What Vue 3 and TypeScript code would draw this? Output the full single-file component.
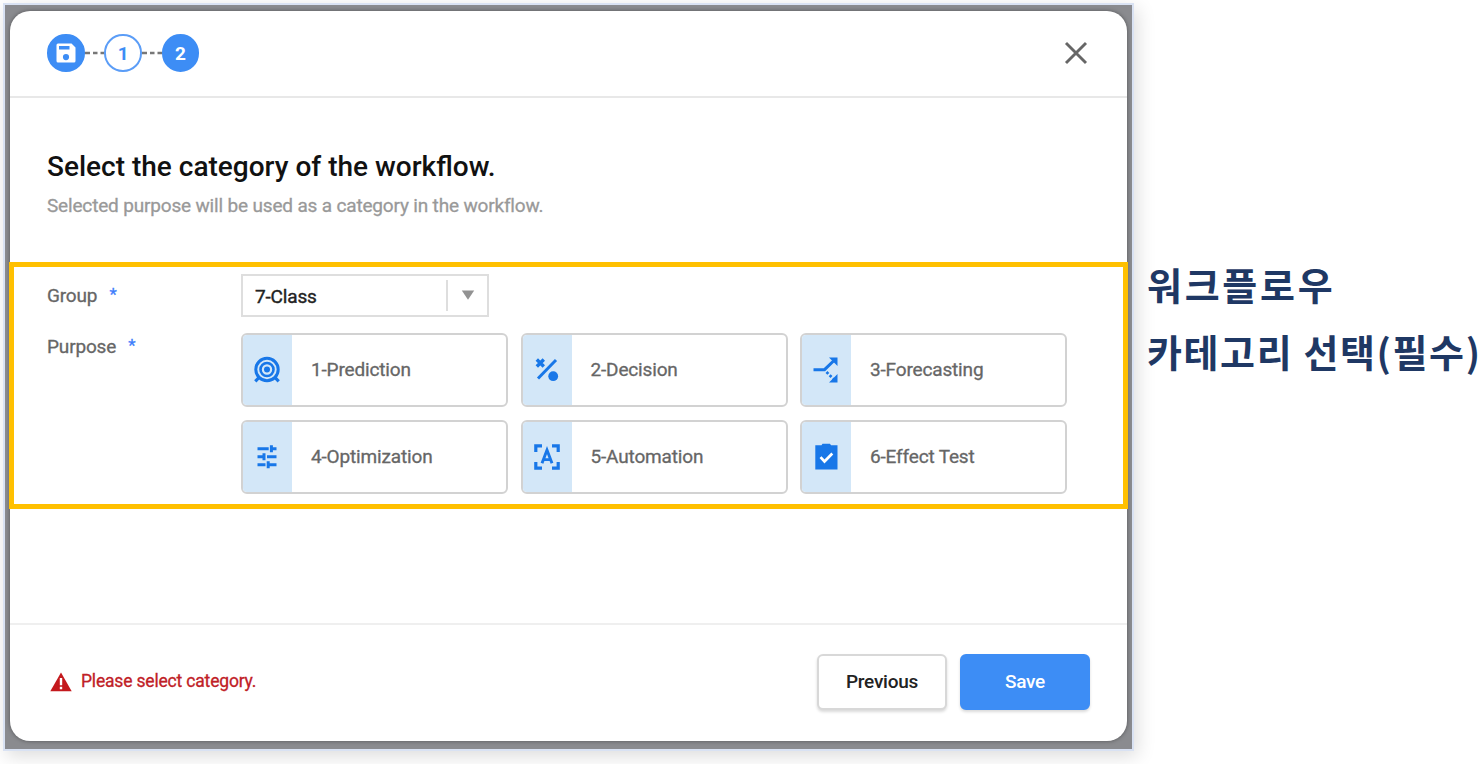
<script setup lang="ts">
interface Purpose {
  id: string
  label: string
}

const purposes: Purpose[] = [
  { id: 'prediction', label: '1-Prediction' },
  { id: 'decision', label: '2-Decision' },
  { id: 'forecasting', label: '3-Forecasting' },
  { id: 'optimization', label: '4-Optimization' },
  { id: 'automation', label: '5-Automation' },
  { id: 'effect', label: '6-Effect Test' },
]
</script>

<template>
  <div class="page">
    <div class="frame">
      <div class="modal">
        <header class="head">
          <div class="steps">
            <span class="step filled">
              <svg width="20" height="20" viewBox="0 0 20 20">
                <path fill="#fff" fill-rule="evenodd" d="M2 .5h13.500l4 4V18a1.500 1.500 0 0 1-1.500 1.500H2A1.500 1.500 0 0 1 .5 18V2A1.500 1.500 0 0 1 2 .5zM3 3v3.600h10.500V3zM10 11a3.100 3.100 0 1 0 0 6.200a3.100 3.100 0 0 0 0-6.200z" />
              </svg>
            </span>
            <svg class="dash" width="20" height="4" viewBox="0 0 20 4"><path d="M0 2h5M8 2h4.500M15.500 2h4.500" stroke="#777" stroke-width="2.600" /></svg>
            <span class="step">1</span>
            <svg class="dash" width="20" height="4" viewBox="0 0 20 4"><path d="M0 2h5M8 2h4.500M15.500 2h4.500" stroke="#777" stroke-width="2.600" /></svg>
            <span class="step filled">2</span>
          </div>
          <svg class="close" width="24" height="24" viewBox="0 0 24 24"><path d="M2 2l20 20M22 2L2 22" stroke="#666" stroke-width="2.900" /></svg>
        </header>

        <main class="body">
          <h1>Select the category of the workflow.</h1>
          <p class="sub">Selected purpose will be used as a category in the workflow.</p>

          <section class="highlight">
            <div class="row group">
              <div class="label">Group<i>*</i></div>
              <div class="select">
                <span class="value">7-Class</span>
                <span class="arrow">
                  <svg width="14" height="10" viewBox="0 0 14 10"><path d="M.8.500h12.400L7 9.700z" fill="#929292" /></svg>
                </span>
              </div>
            </div>
            <div class="row purpose">
              <div class="label">Purpose<i>*</i></div>
              <div class="cards">
                <div v-for="p in purposes" :key="p.id" class="card">
                  <span class="icon">
                    <svg v-if="p.id === 'prediction'" width="28" height="28" viewBox="0 0 28 28" fill="none" stroke="#1877e8">
                      <circle cx="14" cy="13.500" r="11.200" stroke-width="3" />
                      <circle cx="14" cy="13.500" r="6.500" stroke-width="2.600" />
                      <circle cx="14" cy="13.500" r="3" fill="#1877e8" stroke="none" />
                      <path d="M6 21.500l-3.700 3.900M22 21.500l3.700 3.900" stroke-width="3.200" />
                    </svg>
                    <svg v-else-if="p.id === 'decision'" width="28" height="28" viewBox="0 0 28 28" fill="none" stroke="#1877e8">
                      <path d="M3.800 3.500l7 7M10.800 3.500l-7 7" stroke-width="3.400" />
                      <path d="M23 4L5 22.500" stroke-width="3" />
                      <circle cx="20.200" cy="20.200" r="4.900" fill="#1877e8" stroke="none" />
                    </svg>
                    <svg v-else-if="p.id === 'forecasting'" width="28" height="28" viewBox="0 0 28 28" fill="none" stroke="#1877e8">
                      <path d="M1.500 13.700h11l9-8.700" stroke-width="3" />
                      <path d="M17 1.500h8.500V10zM25.500 18v8.500H17z" fill="#1877e8" stroke="none" />
                      <path d="M14.500 16l8 8" stroke-width="2.700" stroke-dasharray="2.600 1.900" />
                    </svg>
                    <svg v-else-if="p.id === 'optimization'" width="28" height="28" viewBox="0 0 28 28" fill="none" stroke="#1877e8" stroke-width="3">
                      <path d="M4.500 5.800h11.200M17 5.800h6.500M4.500 13.800h6.200M14 13.800h9.500M4.500 21.800h8M15.500 21.800h8" />
                      <path d="M18.400 2.300v7M11 10.300v7M15.200 18.300v7" />
                    </svg>
                    <svg v-else-if="p.id === 'automation'" width="28" height="28" viewBox="0 0 28 28" fill="none" stroke="#1877e8" stroke-width="3.200">
                      <path d="M2.800 9V2.800H9M19 2.800h6.200V9M25.200 19v6.200H19M9 25.200H2.800V19" />
                      <path d="M9 20.300l5-13.200l5 13.200M10.500 16.600h7" stroke-width="2.900" />
                    </svg>
                    <svg v-else width="28" height="28" viewBox="0 0 28 28">
                      <path fill="#1877e8" d="M3.300 2.200h6.200l1-1.400h7.500l1 1.400h6.500v24.400H3.300z" />
                      <path d="M8.500 14.200l4 4.300l7.800-8" fill="none" stroke="#fff" stroke-width="2.700" />
                    </svg>
                  </span>
                  <span class="name">{{ p.label }}</span>
                </div>
              </div>
            </div>
          </section>
        </main>

        <footer class="foot">
          <svg width="22" height="20" viewBox="0 0 22 20">
            <path d="M11 .5L21.700 19.300H.3z" fill="#c4191d" />
            <path d="M11 6v7.200M11 14.700v2.600" stroke="#fff" stroke-width="2.400" />
          </svg>
          <span class="warn">Please select category.</span>
          <button class="btn">Previous</button>
          <button class="btn primary">Save</button>
        </footer>
      </div>
    </div>
    <aside class="note">
      <div class="n1">워크플로우</div>
      <div class="n2">카테고리 선택(필수)</div>
    </aside>
  </div>
</template>

<style>
html,
body {
  margin: 0;
  background: #fff;
  overflow: hidden;
}
</style>

<style scoped>
* {
  box-sizing: border-box;
}
.page {
  display: flex;
  width: 1484px;
  height: 764px;
  padding: 3px 0 0 3px;
  overflow: hidden;
  font-family: Roboto, sans-serif;
  background: #fff;
}
.frame {
  flex: none;
  width: 1131px;
  height: 748px;
  padding: 6px 5px 8px 5px;
  border: 2px solid #d9e2f3;
  background: #8a8b8f;
  box-shadow: 3px 5px 18px rgba(0, 0, 0, 0.14);
}
.modal {
  display: flex;
  flex-direction: column;
  width: 1117px;
  height: 730px;
  border-radius: 20px;
  background: #fff;
  box-shadow: 0 0 4px rgba(0, 0, 0, 0.4);
}
.head {
  display: flex;
  flex: none;
  align-items: center;
  justify-content: space-between;
  height: 87px;
  padding: 0 39px 1px 37px;
  border-bottom: 2px solid #e8e8e8;
}
.steps {
  display: flex;
  align-items: center;
}
.step {
  display: flex;
  align-items: center;
  justify-content: center;
  width: 37.500px;
  height: 37.500px;
  border: 2px solid #5b9df7;
  border-radius: 50%;
  color: #3d8df5;
  font-size: 19px;
  font-weight: 700;
}
.filled {
  border-color: #3d8df5;
  background: #3d8df5;
  color: #fff;
}
.dash {
  margin-right: -0.100px;
}
.close {
  margin-bottom: 1px;
}
.body {
  flex: 1;
}
h1 {
  margin: 51px 0 0 37px;
  font-size: 28px;
  font-weight: 500;
  line-height: 36px;
  color: #111;
  white-space: nowrap;
}
.sub {
  margin: 9px 0 0 37px;
  font-size: 19px;
  line-height: 24px;
  letter-spacing: -0.170px;
  color: #999;
  -webkit-text-stroke: 0.300px #999;
  white-space: nowrap;
}
.highlight {
  width: 1119px;
  height: 247px;
  margin: 44px 0 0 -1px;
  padding: 7px 0 0 33px;
  border: 5px solid #ffc000;
}
.row {
  display: flex;
}
.label {
  width: 194px;
  font-size: 19px;
  line-height: 24px;
  letter-spacing: -0.160px;
  color: #666;
  -webkit-text-stroke: 0.300px;
}
.label i {
  margin-left: 12px;
  font-size: 17px;
  line-height: 1;
  vertical-align: 2px;
  font-style: normal;
  color: #3d7dfb;
}
.group .label {
  padding-top: 10px;
}
.select {
  display: flex;
  align-items: center;
  width: 248px;
  height: 43px;
  border: 2px solid #dedede;
}
.value {
  flex: 1;
  padding: 1px 0 0 12px;
  font-size: 19px;
  letter-spacing: -0.160px;
  color: #222;
  -webkit-text-stroke: 0.400px;
}
.arrow {
  display: flex;
  align-items: center;
  justify-content: center;
  width: 41px;
  height: 31px;
  border-left: 2px solid #dedede;
}
.arrow svg {
  margin-bottom: 1px;
}
.purpose {
  margin-top: 15.500px;
}
.purpose .label {
  padding-top: 2px;
}
.cards {
  display: grid;
  grid-template-columns: repeat(3, 267px);
  grid-auto-rows: 74.500px;
  gap: 12.500px 12.500px;
}
.card {
  display: flex;
  align-items: center;
  overflow: hidden;
  border: 2px solid #d2d2d2;
  border-radius: 6px;
}
.icon {
  display: flex;
  align-items: center;
  justify-content: center;
  align-self: stretch;
  width: 49px;
  padding-right: 1px;
  background: #d3e7f8;
}
.name {
  margin: 0 0 1px 19px;
  font-size: 19px;
  letter-spacing: -0.160px;
  color: #666;
  -webkit-text-stroke: 0.300px;
}
.foot {
  display: flex;
  flex: none;
  align-items: center;
  height: 118px;
  padding: 0 37px 3px 40px;
  border-top: 2px solid #efefef;
}
.warn {
  flex: 1;
  margin: 0 0 2px 9px;
  font-size: 17.500px;
  letter-spacing: -0.180px;
  color: #bf2026;
  -webkit-text-stroke: 0.300px;
}
.btn {
  width: 130px;
  height: 56px;
  margin-left: 13px;
  padding: 0;
  border: 2px solid #d8d8d8;
  border-radius: 6px;
  background: #fff;
  box-shadow: 0 2px 3px rgba(0, 0, 0, 0.15);
  color: #222;
  font: 500 19px Roboto, sans-serif;
  letter-spacing: -0.250px;
}
.primary {
  border-color: #3d8df5;
  background: #3d8df5;
  color: #fff;
}
.note {
  flex: none;
  margin: 247px 0 0 13px;
  color: #1f3864;
  font: 700 38px/67px "Noto Sans CJK KR", sans-serif;
  white-space: nowrap;
}
.n1 {
  letter-spacing: 2.700px;
}
.n2 {
  letter-spacing: 1.600px;
}
</style>
